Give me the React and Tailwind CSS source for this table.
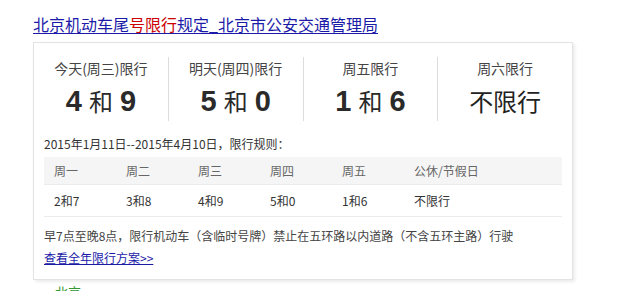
const stats = [
  { label: "今天(周三)限行", a: "4", b: "9" },
  { label: "明天(周四)限行", a: "5", b: "0" },
  { label: "周五限行", a: "1", b: "6" },
  { label: "周六限行", text: "不限行" },
];

const days = ["周一", "周二", "周三", "周四", "周五", "公休/节假日"];
const nums = ["2和7", "3和8", "4和9", "5和0", "1和6", "不限行"];

const StatCol = ({ item, last }) => (
  <div className={`flex h-[64px] flex-1 flex-col items-center pt-[2px] ${last ? "" : "border-r border-[#dcdcdc]"}`}>
    <p className="text-[14px] leading-[18px] text-[#444]">{item.label}</p>
    {item.text ? (
      <p className="mt-[9px] text-[24px] leading-[30px] text-[#222]">{item.text}</p>
    ) : (
      <p className="mt-[9px] text-[24px] leading-[30px] text-[#2a2a2a]">
        <span className="font-bold text-[29px] font-['Liberation_Sans',sans-serif]">{item.a}</span>
        <span className="mx-[7px]">和</span>
        <span className="font-bold text-[29px] font-['Liberation_Sans',sans-serif]">{item.b}</span>
      </p>
    )}
  </div>
);

export default function App() {
  return (
    <div className="h-[291px] w-[621px] overflow-hidden bg-white font-['Noto_Sans_CJK_SC',sans-serif]">
      <div className="pl-[33px] pt-[12px]">
        <a className="text-[16px] leading-[22px] text-[#1b1ba8] underline underline-offset-2">
          北京机动车尾<span className="text-[#c00]">号限行</span>规定_北京市公安交通管理局
        </a>
      </div>
      <div className="ml-[33px] mt-[6px] w-[540px] border border-[#e3e3e3] shadow-[2px_2px_3px_rgba(0,0,0,0.08)]">
        <div className="flex pt-[14px]">
          {stats.map((s, i) => (
            <StatCol key={i} item={s} last={i === stats.length - 1} />
          ))}
        </div>
        <div className="px-[10px] pt-[12px] pb-[12px]">
          <p className="text-[12px] leading-[22px] text-[#333]">2015年1月11日--2015年4月10日，限行规则：</p>
          <div className="mt-[2px] w-[518px]">
            <div className="flex h-[28px] items-center border-b border-[#ececec] bg-[#f5f5f5] pl-[10px] text-[12px] text-[#666]">
              {days.map((d) => (
                <span key={d} className="w-[72px]">{d}</span>
              ))}
            </div>
            <div className="flex h-[32px] items-center border-b border-[#ececec] pl-[10px] text-[12px] text-[#333]">
              {nums.map((n) => (
                <span key={n} className="w-[72px]">{n}</span>
              ))}
            </div>
          </div>
          <p className="mt-[10px] text-[12px] leading-[18px] text-[#444]">
            早7点至晚8点，限行机动车（含临时号牌）禁止在五环路以内道路（不含五环主路）行驶
          </p>
          <a className="mt-[4px] block text-[12px] leading-[18px] text-[#1b1ba8] underline">查看全年限行方案&gt;&gt;</a>
        </div>
      </div>
      <div className="ml-[55px] mt-[3px] text-[13px] leading-[18px] text-[#393]">
        <span>北京</span>
      </div>
    </div>
  );
}
